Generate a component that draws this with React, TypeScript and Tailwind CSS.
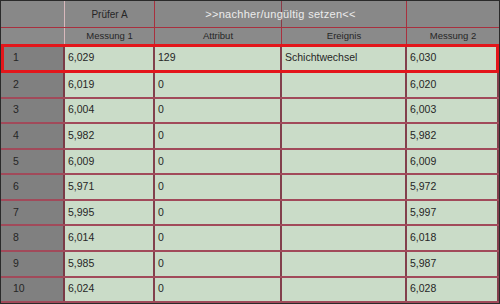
import { FC } from "react";

const rows = [
  { nr: 1, m1: "6,029", attr: "129", event: "Schichtwechsel", m2: "6,030" },
  { nr: 2, m1: "6,019", attr: "0", event: "", m2: "6,020" },
  { nr: 3, m1: "6,004", attr: "0", event: "", m2: "6,003" },
  { nr: 4, m1: "5,982", attr: "0", event: "", m2: "5,982" },
  { nr: 5, m1: "6,009", attr: "0", event: "", m2: "6,009" },
  { nr: 6, m1: "5,971", attr: "0", event: "", m2: "5,972" },
  { nr: 7, m1: "5,995", attr: "0", event: "", m2: "5,997" },
  { nr: 8, m1: "6,014", attr: "0", event: "", m2: "6,018" },
  { nr: 9, m1: "5,985", attr: "0", event: "", m2: "5,987" },
  { nr: 10, m1: "6,024", attr: "0", event: "", m2: "6,028" },
];

const cols = "grid grid-cols-[64px_90px_127px_125px_1fr]";

const App: FC = () => {
  const cell = "flex items-center px-[3px] border-r-2 border-[#82404c] bg-[#cadcc8] text-[10.5px] text-[#262626]";

  return (
    <div
      className="w-[500px] h-[304px] border border-[#2a2a2a] bg-[#888888] flex flex-col overflow-hidden"
      style={{ fontFamily: '"Liberation Sans", Arial, sans-serif' }}
    >
      {/* Header row 1 */}
      <div className={`${cols} h-[27px] shrink-0 border-b border-[#a8303e] bg-[#888888]`}>
        <div className="border-r border-[#d8b8bc]" />
        <div className="flex items-center justify-center border-r border-[#a8303e] text-[10px] text-[#262626]">
          Prüfer A
        </div>
        <div className="col-span-2 relative flex items-center justify-center border-r border-[#a8303e]">
          <div className="absolute left-[126px] top-0 bottom-0 w-px bg-[#8a3a46]" />
          <span className="relative text-[11px] text-[#ececec] tracking-[0.3px]">&gt;&gt;nachher/ungültig setzen&lt;&lt;</span>
        </div>
        <div />
      </div>

      {/* Header row 2 */}
      <div className={`${cols} h-[16px] shrink-0 bg-[#8a8a8a] text-[9.5px] text-[#262626]`}>
        <div className="border-r border-[#d8b8bc]" />
        <div className="flex items-center justify-center border-r border-[#a8303e]">Messung 1</div>
        <div className="flex items-center justify-center border-r border-[#a8303e]">Attribut</div>
        <div className="flex items-center justify-center border-r border-[#a8303e]">Ereignis</div>
        <div className="flex items-center justify-center">Messung 2</div>
      </div>

      {rows.map((r) => (
        <div
          key={r.nr}
          className={`${cols} border-b-2 border-[#a14a5a] ${
            r.nr === 1
              ? "h-[29px] shrink-0 outline-3 outline-[#e3161b] -outline-offset-3 relative z-10"
              : "flex-1"
          }`}
        >
          <div className="flex items-center pl-[12px] bg-[#808080] border-r-2 border-[#7a3a46] text-[10.5px] text-[#262626]">
            {r.nr}
          </div>
          <div className={cell}>{r.m1}</div>
          <div className={cell}>{r.attr}</div>
          <div className={cell}>{r.event}</div>
          <div className={`${cell} border-r-0`}>{r.m2}</div>
        </div>
      ))}
    </div>
  );
};

export default App;
